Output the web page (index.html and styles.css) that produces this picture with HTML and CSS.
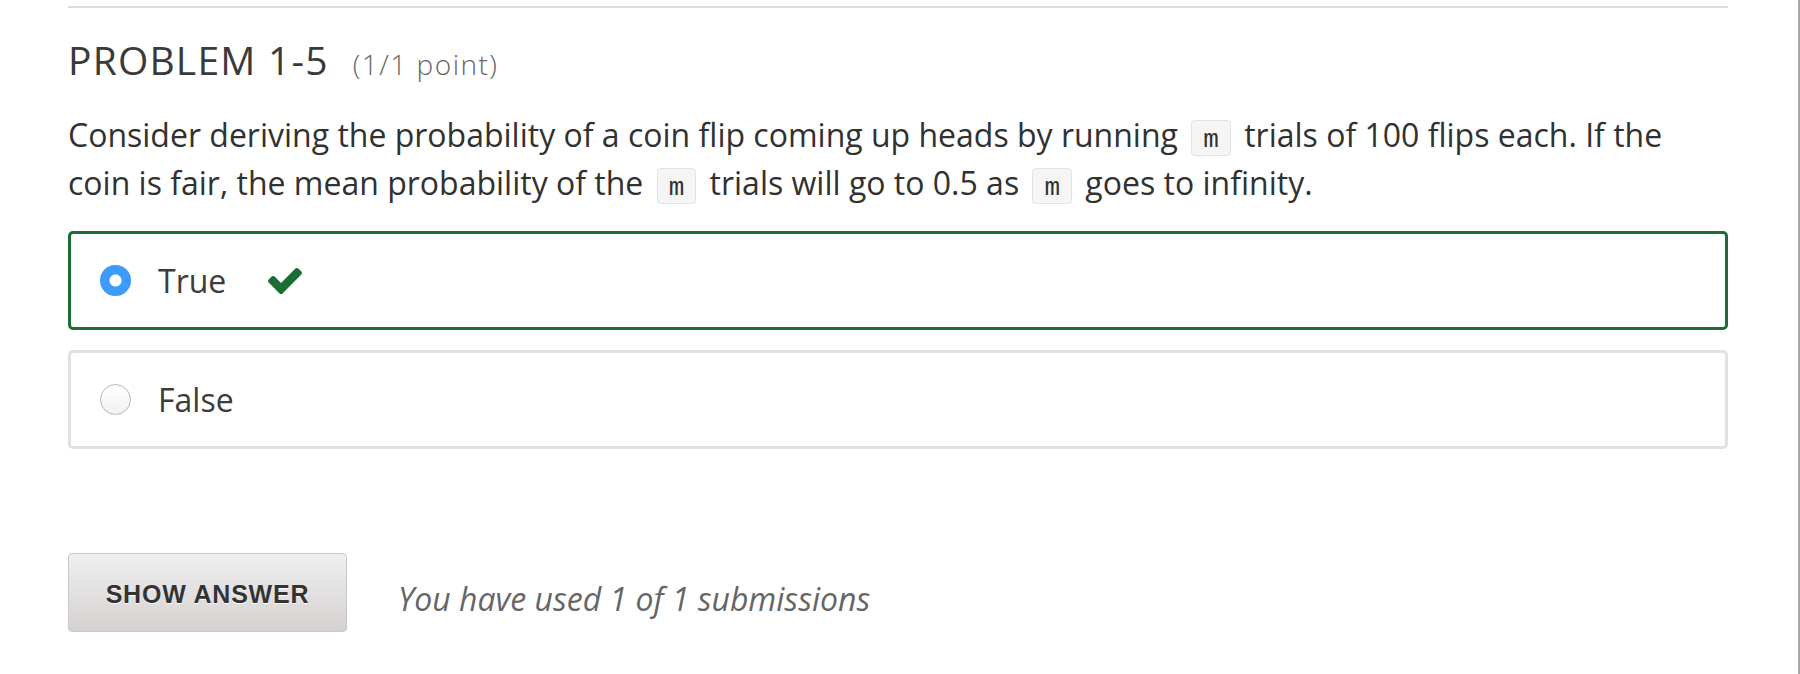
FILE: index.html
```html
<!DOCTYPE html>
<html lang="en">
<head>
<meta charset="utf-8">
<title>Problem 1-5</title>
<link rel="stylesheet" href="styles.css">
</head>
<body>
<div class="page">
  <main class="problem">
    <div class="rule"></div>
    <h3 class="problem-header">PROBLEM 1-5<span class="points">(1/1 point)</span></h3>
    <p class="question">Consider deriving the probability of a coin flip coming up heads by running <code>m</code> trials of 100 flips each. If the coin is fair, the mean probability of the <code>m</code> trials will go to 0.5 as <code>m</code> goes to infinity.</p>
    <div class="choices">
      <label class="choice correct">
        <span class="radio checked"></span>
        <span class="choice-text">True</span>
        <svg class="check" viewBox="121 334 1550 1188" width="34" height="26" aria-hidden="true"><path d="M1671 566q0 40-28 68l-724 724-136 136q-28 28-68 28t-68-28l-136-136-362-362q-28-28-28-68t28-68l136-136q28-28 68-28t68 28l294 295 656-657q28-28 68-28t68 28l136 136q28 28 28 68z"/></svg>
      </label>
      <label class="choice">
        <span class="radio"></span>
        <span class="choice-text">False</span>
      </label>
    </div>
    <div class="actions">
      <button class="show-answer">SHOW ANSWER</button>
      <span class="submissions">You have used 1 of 1 submissions</span>
    </div>
  </main>
  <div class="edge"></div>
</div>
</body>
</html>
```

FILE: styles.css
```css
html, body {
  margin: 0;
  padding: 0;
  background: #fff;
}

body {
  font-family: "Open Sans", "Liberation Sans", sans-serif;
  overflow: hidden;
}

.page {
  display: flex;
  width: 1800px;
  height: 674px;
}

.problem {
  width: 1660px;
  margin-left: 68px;
  padding-top: 6px;
}

.rule {
  height: 2px;
  background: #dddddd;
}

.problem-header {
  margin: 28px 0 0;
  font-size: 39px;
  line-height: 47px;
  font-weight: 400;
  letter-spacing: 1.2px;
  color: #3a3a3a;
}

.points {
  margin-left: 24px;
  font-size: 28px;
  font-weight: 300;
  letter-spacing: 1.5px;
  color: #666666;
}

.question {
  margin: 23px 0 0;
  font-size: 32px;
  line-height: 48px;
  color: #313131;
}

.question code {
  font-family: "Liberation Mono", "DejaVu Sans Mono", monospace;
  font-size: 26px;
  line-height: 1;
  padding: 4px 11px 0;
  margin: 0 5px;
  background: #f5f5f5;
  border: 1px solid #e3e3e3;
  border-radius: 4px;
  color: #333;
}

.choices {
  margin-top: 24px;
  display: flex;
  flex-direction: column;
  gap: 20px;
}

.choice {
  box-sizing: border-box;
  height: 99px;
  display: flex;
  align-items: center;
  padding-left: 29px;
  border: 3px solid #e1e1e1;
  border-radius: 5px;
  font-size: 32px;
  line-height: 48px;
  color: #3c3c3c;
}

.choice.correct {
  border-color: #1b6d36;
}

.radio {
  box-sizing: border-box;
  width: 31px;
  height: 31px;
  border-radius: 50%;
  border: 1px solid #b8b8b8;
  background: linear-gradient(#ffffff, #f1f1f1);
  margin-right: 27px;
  flex: none;
}

.radio.checked {
  border: none;
  background: radial-gradient(circle, #ffffff 0, #ffffff 5.5px, #3d9bfb 6.5px);
  box-shadow: inset 0 0 1px rgba(0, 0, 0, 0.15);
}

.check {
  margin-left: 42px;
  fill: #1b6d36;
}

.actions {
  margin-top: 104px;
  display: flex;
  align-items: flex-start;
}

.show-answer {
  box-sizing: border-box;
  width: 279px;
  height: 79px;
  border: 1px solid #cdc8c8;
  border-radius: 4px;
  background: linear-gradient(#efefef, #d5d1d1);
  font-family: "Liberation Sans", Arial, sans-serif;
  font-weight: 700;
  font-size: 25px;
  letter-spacing: 0.8px;
  color: #333;
  text-shadow: 0 1px 0 #fff;
  padding: 3px 0 0;
}

.submissions {
  margin: 22px 0 0 51px;
  font-size: 32px;
  line-height: 48px;
  font-style: italic;
  color: #666;
}

.edge {
  margin-left: auto;
  width: 2px;
  background: #a9a9a9;
}
```
